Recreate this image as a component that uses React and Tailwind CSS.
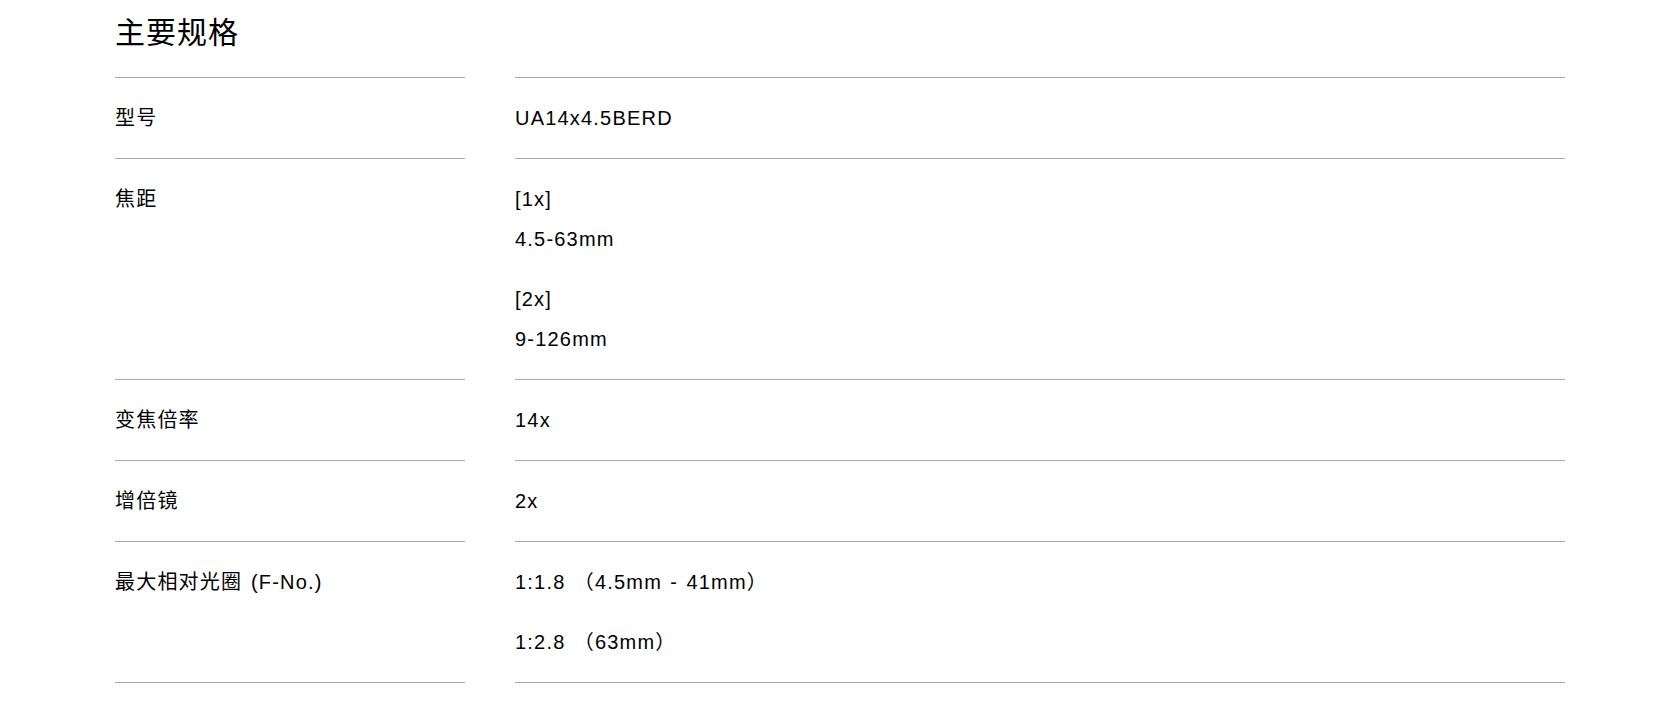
const specs = [
  { label: "型号", values: [["UA14x4.5BERD"]] },
  { label: "焦距", values: [["[1x]", "4.5-63mm"], ["[2x]", "9-126mm"]] },
  { label: "变焦倍率", values: [["14x"]] },
  { label: "增倍镜", values: [["2x"]] },
  { label: "最大相对光圈 (F-No.)", values: [["1:1.8 （4.5mm - 41mm）"], ["1:2.8 （63mm）"]] },
];

export default function App() {
  return (
    <div className="min-h-[704px] bg-white text-black font-['Liberation_Sans','Noto_Sans_CJK_SC',sans-serif]">
      <div className="w-[1450px] ml-[115px]">
        <h2 className="text-[30px] leading-[45px] pt-[10px] mb-[22px] font-normal tracking-[1px]">主要规格</h2>
        <dl>
          {specs.map((row, i) => {
            const last = i === specs.length - 1;
            return (
              <div key={row.label} className="flex gap-[50px]">
                <dt
                  className={
                    "w-[350px] border-t border-[#aaaaaa] py-5 text-[20px] leading-[40px] tracking-[1.2px] [word-spacing:2px] " +
                    (last ? "border-b" : "")
                  }
                >
                  {row.label}
                </dt>
                <dd
                  className={
                    "flex-1 border-t border-[#aaaaaa] py-5 text-[20px] leading-[40px] tracking-[1.2px] [word-spacing:1.5px] flex flex-col gap-5 " +
                    (last ? "border-b" : "")
                  }
                >
                  {row.values.map((group, j) => (
                    <p key={j}>
                      {group.map((line) => (
                        <span key={line} className="block">
                          {line}
                        </span>
                      ))}
                    </p>
                  ))}
                </dd>
              </div>
            );
          })}
        </dl>
      </div>
    </div>
  );
}
